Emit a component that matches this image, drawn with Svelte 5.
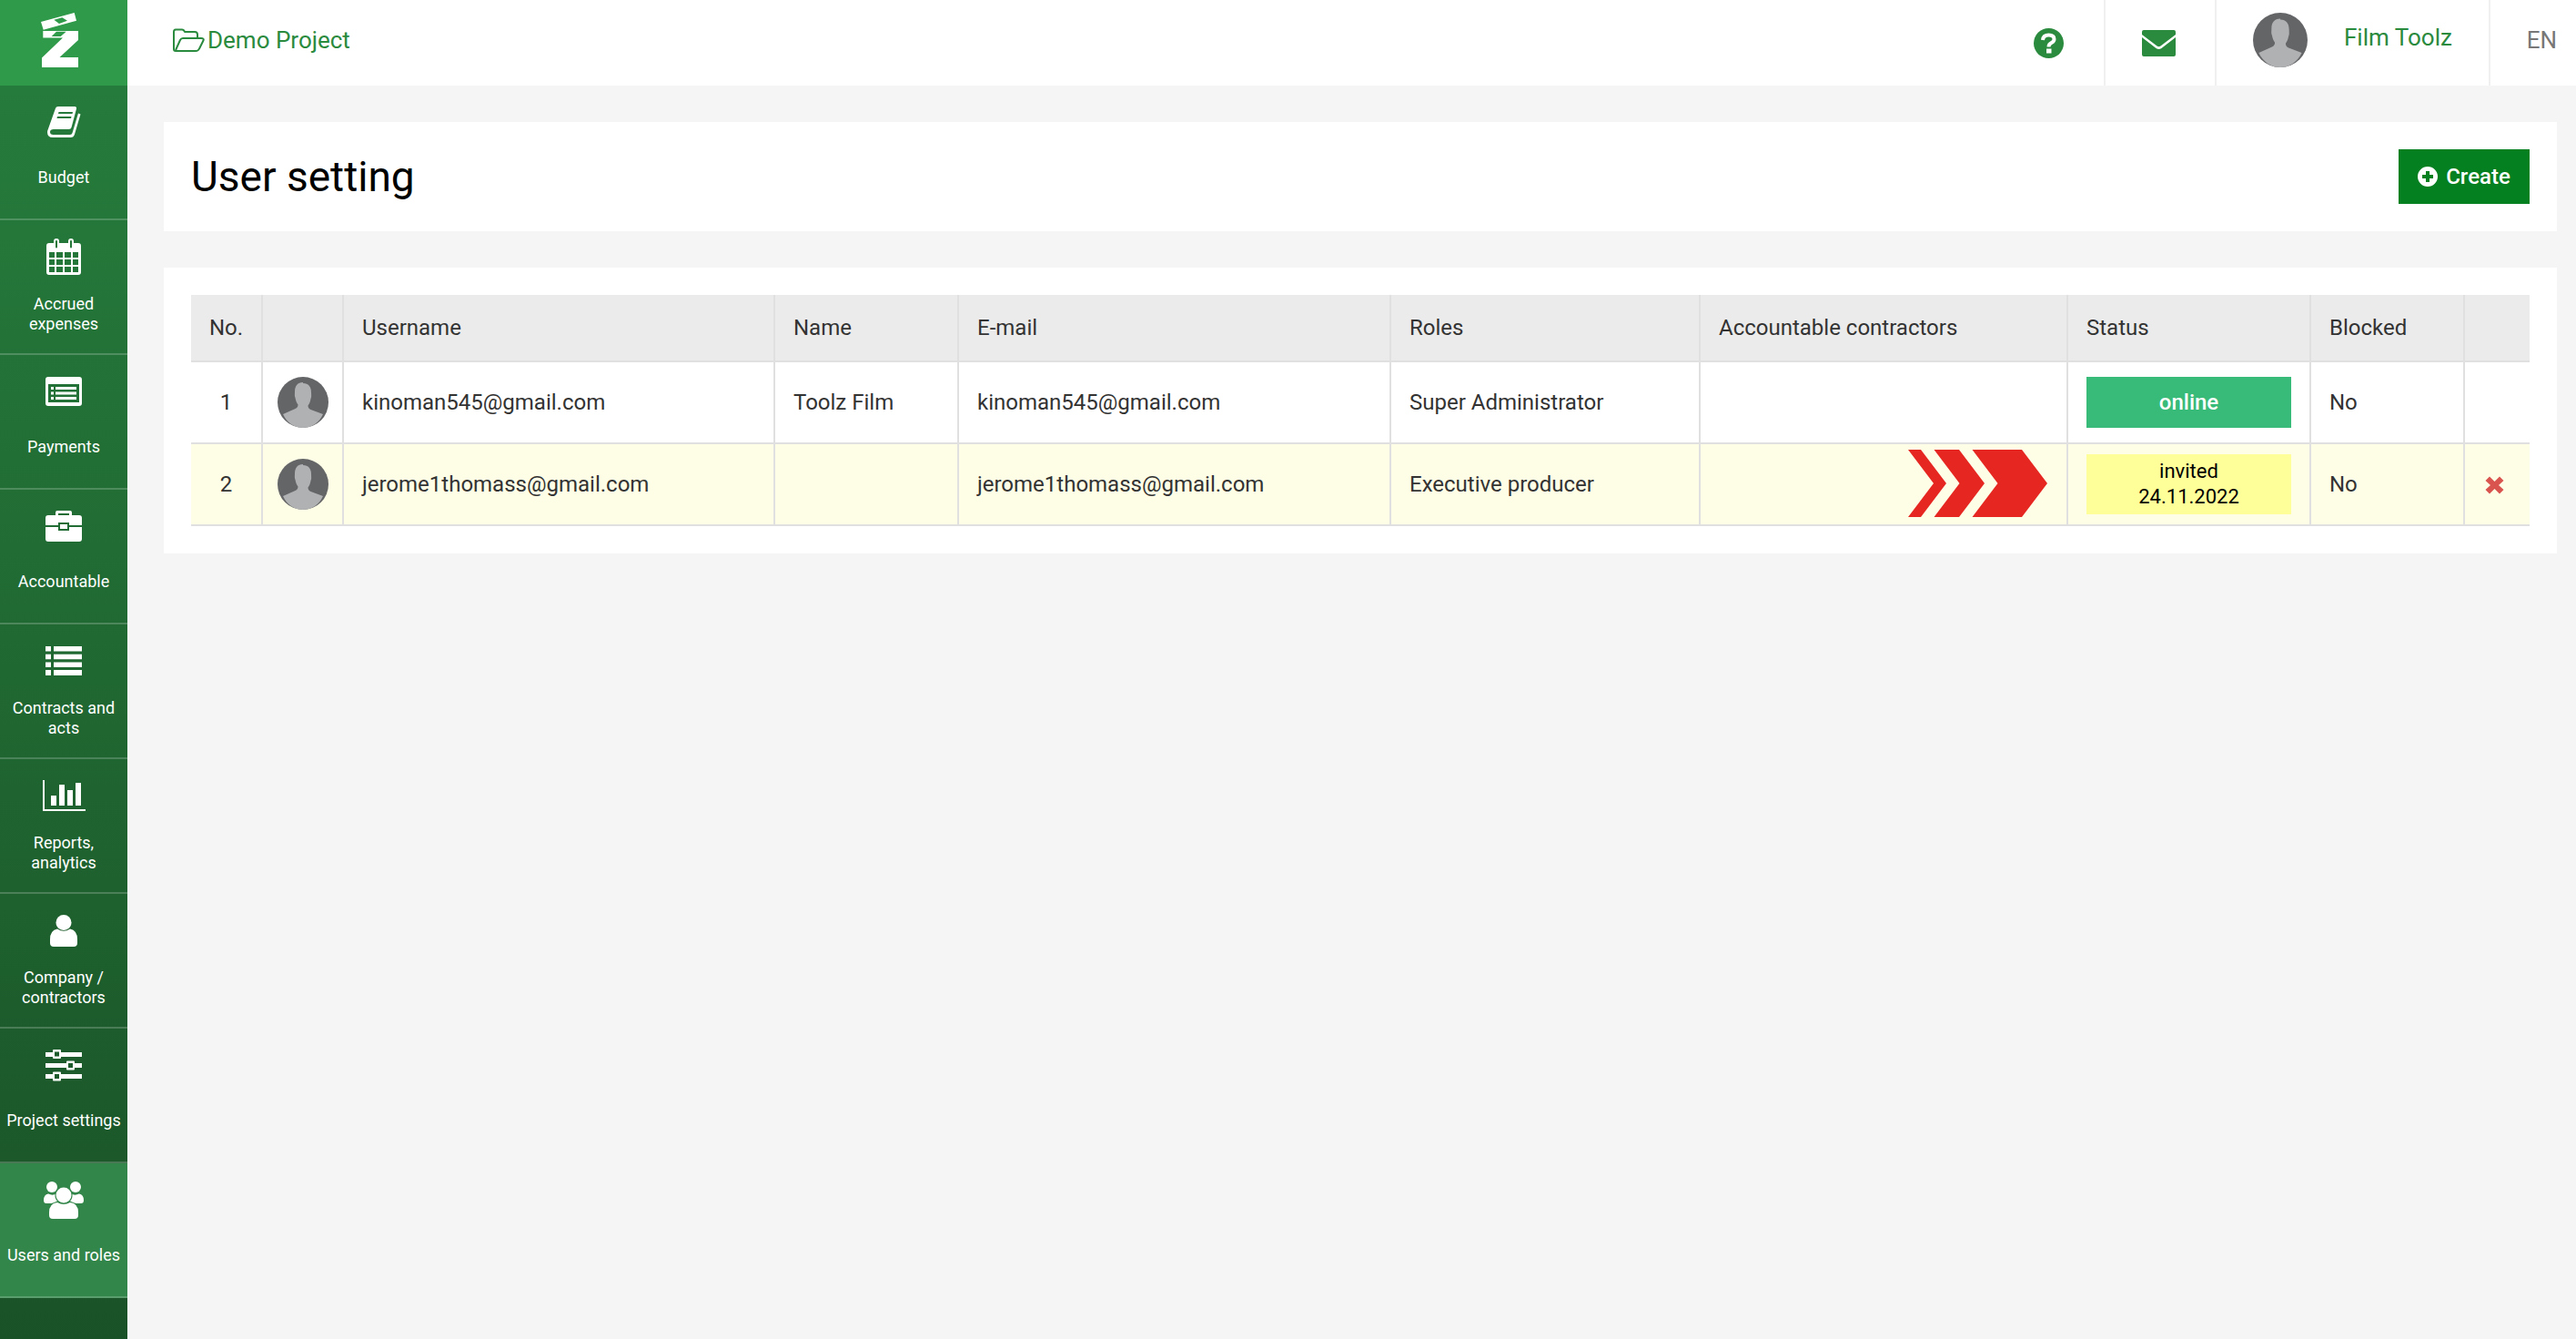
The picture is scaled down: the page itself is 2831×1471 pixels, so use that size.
<script>
  const menu = [
    { key: 'book', label: ['Budget'] },
    { key: 'calendar', label: ['Accrued', 'expenses'] },
    { key: 'payments', label: ['Payments'] },
    { key: 'briefcase', label: ['Accountable'] },
    { key: 'list', label: ['Contracts and', 'acts'] },
    { key: 'chart', label: ['Reports,', 'analytics'] },
    { key: 'user', label: ['Company /', 'contractors'] },
    { key: 'sliders', label: ['Project settings'] },
    { key: 'users', label: ['Users and roles'], active: true }
  ];
  const heads = ['No.', '', 'Username', 'Name', 'E-mail', 'Roles', 'Accountable contractors', 'Status', 'Blocked', ''];
</script>

{#snippet avatar(cls)}
  <svg class={cls} viewBox="0 0 56 56" aria-hidden="true">
    <circle cx="28" cy="28" r="28" fill="#646567" />
    <path fill="#b0b1b3" d="M28 6c-6 0-9 4-9 10 0 3-.5 5 .5 7 .5 3 1.500 5.500 3 7.500 0 2-1 3.500-3 4.500L6 41c4 9 12.500 15 22 15s18-6 22-15l-13.500-5c-2-1-3-2.500-3-4.500 1.500-2 2.500-4.500 3-7.500 1-2 .5-4 .5-7 0-6-3-10-9-10z" />
  </svg>
{/snippet}

{#snippet icon(key)}
  {#if key === 'book'}
    <svg width="37" height="34" viewBox="0 0 37 34"><path fill="#fff" fill-rule="evenodd" d="M9 2Q9.500 0 12 0H30Q32.500 0 32 2.500L26.500 23Q26 25 23.500 25H7Q3 25 3 28Q3 31 6.500 31H25Q27 31 27.500 29L34 7.500 36.500 8.500 30 30.500Q29 34 25.500 34H6Q0 34 0 28Q0 26.500 1 24.500ZM12.500 6 12 8H27.500L28 6ZM11 11 10.500 13H26L26.500 11Z"/></svg>
  {:else if key === 'calendar'}
    <svg width="38" height="40" viewBox="0 0 38 40"><path fill="#fff" fill-rule="evenodd" d="M3 5H8V3Q8 0 11 0Q14 0 14 3V5H24V3Q24 0 27 0Q30 0 30 3V5H35Q38 5 38 8V37Q38 40 35 40H3Q0 40 0 37V8Q0 5 3 5ZM10 3V9.500Q10 10.500 11 10.500Q12 10.500 12 9.500V3Q12 2 11 2Q10 2 10 3ZM26 3V9.500Q26 10.500 27 10.500Q28 10.500 28 9.500V3Q28 2 27 2Q26 2 26 3ZM3 15V21H9V15ZM11 15V21H18V15ZM20 15V21H27V15ZM29 15V21H35V15ZM3 23V29H9V23ZM11 23V29H18V23ZM20 23V29H27V23ZM29 23V29H35V23ZM3 31V37H9V31ZM11 31V37H18V31ZM20 31V37H27V31ZM29 31V37H35V31Z"/></svg>
  {:else if key === 'payments'}
    <svg width="40" height="32" viewBox="0 0 40 32"><path fill="#fff" fill-rule="evenodd" d="M3 0H37Q40 0 40 3V29Q40 32 37 32H3Q0 32 0 29V3Q0 0 3 0ZM3 8V28H37V8ZM6 11H9V14H6ZM11 11H34V14H11ZM6 16.500H9V19.500H6ZM11 16.500H34V19.500H11ZM6 22H9V25H6ZM11 22H34V25H11Z"/></svg>
  {:else if key === 'briefcase'}
    <svg width="40" height="34" viewBox="0 0 40 34"><path fill="#fff" fill-rule="evenodd" d="M3 5H11V2Q11 0 13 0H27Q29 0 29 2V5H37Q40 5 40 8V16H26V13H14V16H0V8Q0 5 3 5ZM14 3V5H26V3ZM0 18H14V22H26V18H40V31Q40 34 37 34H3Q0 34 0 31ZM16 15H24V20H16Z"/></svg>
  {:else if key === 'list'}
    <svg width="40" height="32" viewBox="0 0 40 32"><path fill="#fff" d="M0 0H6V5.500H0ZM9 0H40V5.500H9ZM0 8.700H6V14.200H0ZM9 8.700H40V14.200H9ZM0 17.400H6V22.900H0ZM9 17.400H40V22.900H9ZM0 26.100H6V32H0ZM9 26.100H40V32H9Z"/></svg>
  {:else if key === 'chart'}
    <svg width="47" height="34" viewBox="0 0 47 34"><path fill="#fff" d="M0 0H2V32H47V34H0ZM9 17H15V28H9ZM18 5H24V28H18ZM27 11H33V28H27ZM36 3H42V28H36Z"/></svg>
  {:else if key === 'user'}
    <svg width="30" height="35" viewBox="0 0 30 35"><circle cx="15" cy="8.500" r="8.500" fill="#fff"/><path fill="#fff" d="M8 15.500Q15 20 22 15.500Q30 17 30 27V31Q30 35 26 35H4Q0 35 0 31V27Q0 17 8 15.500Z"/></svg>
  {:else if key === 'sliders'}
    <svg width="40" height="35" viewBox="0 0 40 35"><path fill="#fff" fill-rule="evenodd" d="M0 3H8V1Q8 0 9 0H16Q17 0 17 1V3H40V8H17V9Q17 10 16 10H9Q8 10 8 9V8H0ZM10 2.500V7.500H15V2.500ZM0 15H23V13.500Q23 12.500 24 12.500H31Q32 12.500 32 13.500V15H40V20H32V21.500Q32 22.500 31 22.500H24Q23 22.500 23 21.500V20H0ZM25 15V20H30V15ZM0 27H8V25.500Q8 24.500 9 24.500H16Q17 24.500 17 25.500V27H40V32H17V33.500Q17 34.500 16 34.500H9Q8 34.500 8 33.500V32H0ZM10 27V32H15V27Z"/></svg>
  {:else if key === 'users'}
    <svg width="44" height="41" viewBox="0 0 44 41"><circle cx="9" cy="6" r="6" fill="#fff"/><circle cx="35" cy="6" r="6" fill="#fff"/><circle cx="22" cy="15" r="8.500" fill="#fff"/><path fill="#fff" d="M5 13.500Q9 15.500 12.500 14Q12 19 15 21.500 10 23.500 8 24H3Q0 24 0 20.500 0 14.500 5 13.500ZM39 13.500Q35 15.500 31.500 14Q32 19 29 21.500 34 23.500 36 24H41Q44 24 44 20.500 44 14.500 39 13.500ZM15 23Q22 27 29 23Q38 24 38 34V37Q38 41 34 41H10Q6 41 6 37V34Q6 24 15 23Z"/></svg>
  {/if}
{/snippet}

<div class="app">
  <nav class="side">
    <div class="logo">
      <svg width="80" height="90" viewBox="0 0 80 90">
        <path fill="#fff" fill-rule="evenodd" d="M15 24 51.700 14 54 22.700 17.700 32.700ZM29.300 21.700 35 26 44 22.700 38.300 19.300Z"/>
        <path fill="#fff" fill-rule="evenodd" d="M17.300 34H56V44L35.500 63H56V74H16V63.500L39 41.500H17.300ZM26.700 40H36.700L42.700 34.700H32Z"/>
      </svg>
    </div>
    {#each menu as item}
      <a class="item" class:active={item.active} href="#top">
        <span class="ico">{@render icon(item.key)}</span>
        <span class="lbl" class:two={item.label.length > 1}>
          {#each item.label as line}<span>{line}</span>{/each}
        </span>
      </a>
    {/each}
  </nav>

  <div class="main">
    <header class="top">
      <div class="project">
        <svg width="35" height="26" viewBox="0 0 35 26" fill="none" stroke="#2a8a3e" stroke-width="2" stroke-linejoin="round">
          <path d="M5 25H3Q1 25 1 23V4Q1 1.500 3 1.500H10Q12 1.500 13 4H24Q27 4 27 7V10"/>
          <path d="M5 25Q3 25 3.500 23L8 13Q9 11 11 11H31Q34.500 11 33.500 13.500L29 22.500Q28 25 25 25Z"/>
        </svg>
        <span>Demo Project</span>
      </div>
      <div class="tools">
        <div class="tool help">
          <svg width="33" height="33" viewBox="0 0 33 33"><circle cx="16.500" cy="16.500" r="16.500" fill="#2a8a3e"/><path fill="none" stroke="#fff" stroke-width="4" d="M10 13Q10.500 7.500 16.500 7.500Q22.500 7.500 22.500 12Q22.500 14.500 19.500 16Q16.500 17.500 16.500 20.500"/><rect x="14" y="22.500" width="5.500" height="5" fill="#fff"/></svg>
        </div>
        <div class="tool mail">
          <svg width="37" height="29" viewBox="0 0 37 29"><path fill="#2a8a3e" d="M2 0H35Q37 0 37 2V5L20.500 17.500Q18.500 19 16.500 17.500L0 5V2Q0 0 2 0ZM0 8 15.500 20Q18.500 22 21.500 20L37 8V27Q37 29 35 29H2Q0 29 0 27Z"/></svg>
        </div>
        <div class="tool who">
          {@render avatar('av-top')}
          <span>Film Toolz</span>
        </div>
        <div class="tool lang">EN</div>
      </div>
    </header>

    <main class="content">
      <section class="card head">
        <h1>User setting</h1>
        <button class="create" type="button">
          <svg width="22" height="22" viewBox="0 0 22 22"><path fill="#fff" fill-rule="evenodd" d="M11 0A11 11 0 1 1 11 22A11 11 0 1 1 11 0ZM9 5V9H5V13H9V17H13V13H17V9H13V5Z"/></svg>
          Create
        </button>
      </section>

      <section class="card list">
        <table>
          <colgroup>
            <col class="c1" /><col class="c2" /><col class="c3" /><col class="c4" /><col class="c5" />
            <col class="c6" /><col class="c7" /><col class="c8" /><col class="c9" /><col class="c10" />
          </colgroup>
          <thead>
            <tr>{#each heads as h}<th>{h}</th>{/each}</tr>
          </thead>
          <tbody>
            <tr>
              <td class="num">1</td>
              <td class="pic">{@render avatar('av')}</td>
              <td>kinoman545@gmail.com</td>
              <td>Toolz Film</td>
              <td>kinoman545@gmail.com</td>
              <td>Super Administrator</td>
              <td></td>
              <td class="st"><div class="badge online">online</div></td>
              <td>No</td>
              <td></td>
            </tr>
            <tr class="invited">
              <td class="num">2</td>
              <td class="pic">{@render avatar('av')}</td>
              <td>jerome1thomass@gmail.com</td>
              <td></td>
              <td>jerome1thomass@gmail.com</td>
              <td>Executive producer</td>
              <td class="arrows">
                <svg width="153" height="74" viewBox="0 0 153 74"><path fill="#e62621" d="M0 0H14L42 37 14 74H0L28 37ZM28.500 0H56L84 37 56 74H28.500L56.500 37ZM70.500 0H125L153 37 125 74H70.500L98.500 37Z"/></svg>
              </td>
              <td class="st"><div class="badge wait">invited<br />24.11.2022</div></td>
              <td>No</td>
              <td class="del">
                <svg width="21" height="20" viewBox="0 0 21 20"><path fill="#d9534f" d="M5 0.500 10.500 6 16 0.500 20.500 5 15 10 20.500 15 16 19.500 10.500 14 5 19.500 0.500 15 6 10 0.500 5Z"/></svg>
              </td>
            </tr>
          </tbody>
        </table>
      </section>
    </main>
  </div>
</div>

<style>
  :global(body) {
    margin: 0;
    background: #f5f5f5;
    font-family: Roboto, "Liberation Sans", sans-serif;
  }
  .app {
    display: grid;
    grid-template-columns: 140px 1fr;
    height: 1471px;
    overflow: hidden;
  }
  .side {
    display: flex;
    flex-direction: column;
    background: linear-gradient(180deg, #267e3d 0%, #1a5227 100%);
  }
  .logo {
    height: 94px;
    display: flex;
    justify-content: center;
    background: #2f9a49;
  }
  .item {
    box-sizing: border-box;
    height: 148px;
    display: flex;
    flex-direction: column;
    align-items: center;
    border-bottom: 2px solid rgba(255, 255, 255, 0.2);
    color: #fff;
    text-decoration: none;
    font-size: 18px;
    line-height: 22px;
  }
  .item.active {
    background: #33864a;
  }
  .ico {
    height: 48px;
    margin-top: 16px;
    display: flex;
    align-items: center;
    justify-content: center;
  }
  .lbl {
    flex: 1;
    display: flex;
    flex-direction: column;
    justify-content: center;
    align-items: center;
    padding-bottom: 8px;
    white-space: nowrap;
  }
  .lbl.two {
    padding-bottom: 5px;
  }
  .top {
    height: 94px;
    background: #fff;
    display: flex;
    justify-content: space-between;
  }
  .project {
    display: flex;
    align-items: center;
    gap: 3px;
    padding-left: 50px;
    padding-bottom: 6px;
    color: #2a8a3e;
    font-size: 26px;
  }
  .tools {
    display: flex;
    align-items: stretch;
  }
  .tool {
    box-sizing: border-box;
    display: flex;
    align-items: center;
    justify-content: center;
  }
  .help {
    width: 124px;
    padding-left: 1px;
    border-right: 2px solid #f0f0f0;
  }
  .mail {
    width: 122px;
    padding-right: 4px;
    border-right: 2px solid #f0f0f0;
  }
  .who {
    width: 301px;
    justify-content: flex-start;
    padding-left: 40px;
    padding-bottom: 6px;
    gap: 40px;
    border-right: 2px solid #f0f0f0;
    color: #2a8a3e;
    font-size: 26px;
  }
  .who span {
    margin-bottom: 6px;
  }
  .av-top {
    width: 60px;
    height: 60px;
  }
  .lang {
    width: 94px;
    justify-content: flex-end;
    padding-right: 21px;
    padding-bottom: 6px;
    color: #777;
    font-size: 26px;
  }
  .content {
    padding: 40px 21px 0 40px;
    display: flex;
    flex-direction: column;
    gap: 40px;
  }
  .card {
    background: #fff;
    padding: 30px;
  }
  .head {
    box-sizing: border-box;
    height: 120px;
    display: flex;
    align-items: center;
    justify-content: space-between;
    padding-top: 0;
    padding-bottom: 0;
  }
  h1 {
    margin: 0;
    font-size: 46px;
    font-weight: 400;
    color: #000;
  }
  .create {
    width: 144px;
    height: 60px;
    display: flex;
    align-items: center;
    justify-content: center;
    gap: 9px;
    border: 0;
    background: #048021;
    color: #fff;
    font: 500 24px Roboto, sans-serif;
  }
  table {
    width: 2570px;
    table-layout: fixed;
    border-collapse: separate;
    border-spacing: 0;
    font-size: 24px;
    color: #333;
  }
  .c1 { width: 79px; }
  .c2 { width: 89px; }
  .c3 { width: 474px; }
  .c4 { width: 202px; }
  .c5 { width: 475px; }
  .c6 { width: 340px; }
  .c7 { width: 404px; }
  .c8 { width: 267px; }
  .c9 { width: 169px; }
  .c10 { width: 71px; }
  th, td {
    box-sizing: border-box;
    padding: 0 0 0 20px;
    text-align: left;
    font-weight: 400;
    border-right: 2px solid #e0e0e0;
    border-bottom: 2px solid #e0e0e0;
  }
  th:last-child, td:last-child {
    border-right: 0;
  }
  th {
    height: 74px;
    background: #ebebeb;
  }
  td {
    height: 90px;
  }
  .invited td {
    background: #fefee6;
  }
  .num {
    padding: 0;
    text-align: center;
  }
  .pic {
    padding: 0;
    text-align: center;
  }
  .av {
    display: block;
    width: 56px;
    height: 56px;
    margin: 0 auto;
  }
  .arrows {
    padding: 6px 0 0 0;
    line-height: 0;
    vertical-align: top;
  }
  .arrows svg {
    display: block;
    margin-left: auto;
    margin-right: 21px;
  }
  .st {
    padding: 0 20px;
  }
  .badge {
    display: flex;
    align-items: center;
    justify-content: center;
    text-align: center;
  }
  .online {
    height: 56px;
    background: #38ba78;
    color: #fff;
    font-weight: 500;
  }
  .wait {
    height: 66px;
    background: #ffff99;
    color: #000;
    font-size: 22px;
    line-height: 28px;
  }
  .del {
    padding-left: 22px;
  }
  .del svg {
    display: block;
    margin-top: 2px;
  }
</style>
